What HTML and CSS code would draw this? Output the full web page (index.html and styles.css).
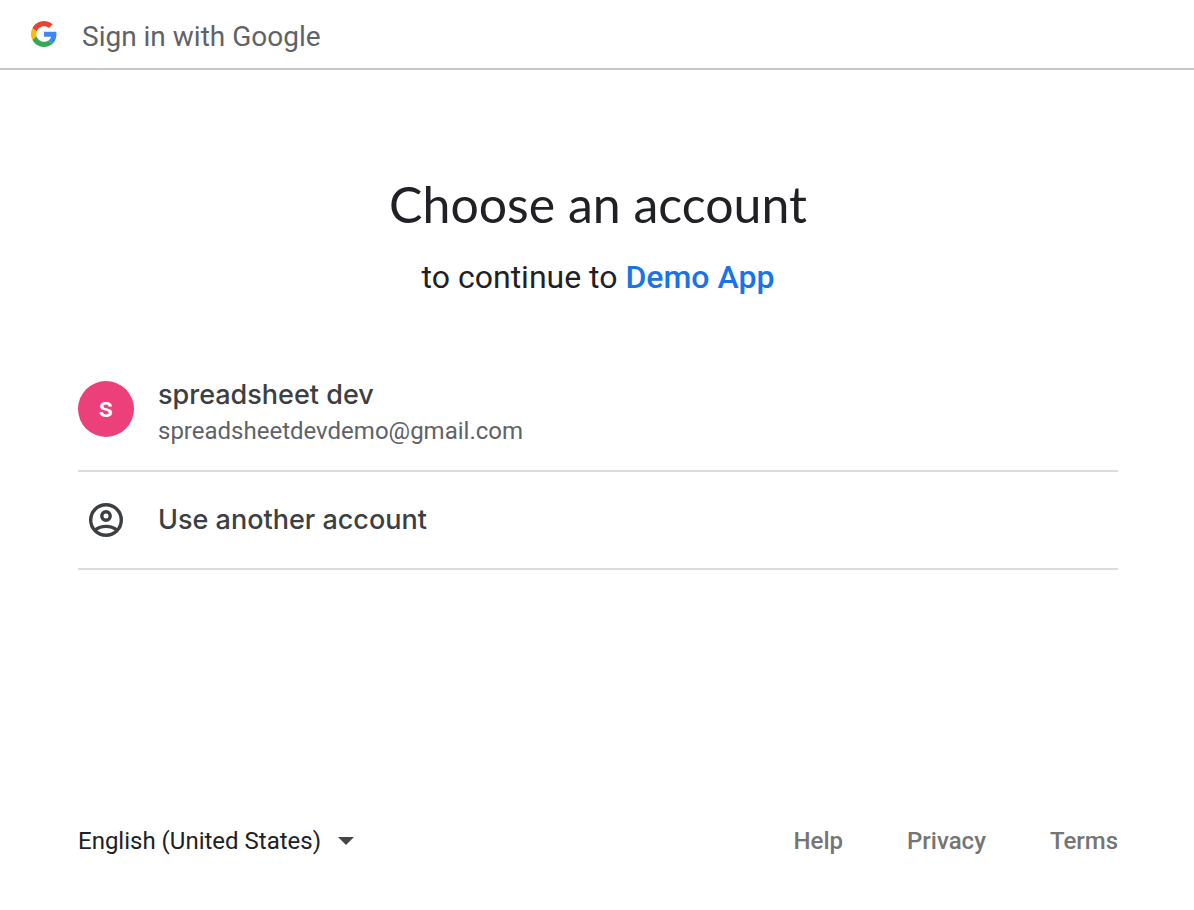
FILE: index.html
```html
<!DOCTYPE html>
<html lang="en">
<head>
<meta charset="utf-8">
<meta name="viewport" content="width=device-width, initial-scale=1">
<title>Sign in with Google</title>
<link rel="stylesheet" href="styles.css">
</head>
<body>
<header class="topbar">
  <svg class="logo" viewBox="0 0 48 48" aria-hidden="true">
    <path fill="#EA4335" d="M24 9.5c3.54 0 6.71 1.22 9.21 3.6l6.85-6.85C35.9 2.38 30.47 0 24 0 14.62 0 6.51 5.38 2.56 13.22l7.98 6.19C12.43 13.72 17.74 9.5 24 9.5z"/>
    <path fill="#4285F4" d="M46.98 24.55c0-1.57-.15-3.09-.38-4.55H24v9.02h12.94c-.58 2.96-2.26 5.48-4.78 7.18l7.73 6c4.51-4.18 7.09-10.36 7.09-17.65z"/>
    <path fill="#FBBC05" d="M10.53 28.59c-.48-1.45-.76-2.99-.76-4.59s.27-3.14.76-4.59l-7.98-6.19C.92 16.46 0 20.12 0 24c0 3.88.92 7.54 2.56 10.78l7.97-6.19z"/>
    <path fill="#34A853" d="M24 48c6.48 0 11.93-2.13 15.89-5.81l-7.73-6c-2.15 1.45-4.92 2.3-8.16 2.3-6.26 0-11.57-4.22-13.47-9.91l-7.98 6.19C6.51 42.62 14.62 48 24 48z"/>
  </svg>
  <span class="topbar-title">Sign in with Google</span>
</header>
<div class="page">
  <main class="chooser">
    <h1 class="heading">Choose an account</h1>
    <p class="subheading">to continue to <a class="app-link" href="#">Demo App</a></p>
    <ul class="accounts">
      <li class="account-item">
        <button class="account account-saved" type="button">
          <span class="avatar" aria-hidden="true">s</span>
          <span class="account-text">
            <span class="account-name">spreadsheet dev</span>
            <span class="account-email">spreadsheetdevdemo@gmail.com</span>
          </span>
        </button>
      </li>
      <li class="account-item">
        <button class="account" type="button">
          <span class="icon-slot">
            <svg class="person" viewBox="0 0 34 34" fill="none" stroke="#3c4043" stroke-width="3.4" aria-hidden="true">
              <circle cx="17" cy="17" r="15.3"/>
              <circle cx="17" cy="13" r="4.2"/>
              <path d="M5.8 27.2C9 24.8 12.8 23.4 17 23.4s8 1.4 11.2 3.8"/>
            </svg>
          </span>
          <span class="account-name">Use another account</span>
        </button>
      </li>
    </ul>
  </main>
  <footer class="footer">
    <div class="language">
      <select class="language-select" aria-label="Language">
        <option>English (United States)</option>
      </select>
      <svg class="caret" viewBox="0 0 16 8" aria-hidden="true"><path fill="#444746" d="M0 0h16L8 8z"/></svg>
    </div>
    <nav class="links">
      <a class="footer-link" href="#">Help</a>
      <a class="footer-link" href="#">Privacy</a>
      <a class="footer-link" href="#">Terms</a>
    </nav>
  </footer>
</div>
</body>
</html>
```
FILE: styles.css
```css
* {
  box-sizing: border-box;
}

body {
  margin: 0;
  min-height: 100vh;
  display: flex;
  flex-direction: column;
  background: #fff;
  color: #202124;
  font-family: Roboto, "Liberation Sans", sans-serif;
}

.topbar {
  display: flex;
  align-items: center;
  gap: 24px;
  padding: 0 30px;
  height: 70px;
  border-bottom: 2px solid #c8c8c8;
}

.logo {
  width: 28px;
  height: 26px;
}

.topbar-title {
  padding-top: 6px;
  color: #5f6368;
  font-size: 28px;
  line-height: 32px;
}

.page {
  flex: 1;
  display: flex;
  flex-direction: column;
  justify-content: space-between;
  padding: 102px 76px 49px 78px;
}

.heading {
  margin: 0;
  font-family: Lato, sans-serif;
  font-size: 50px;
  font-weight: 400;
  line-height: 64px;
  text-align: center;
}

.subheading {
  margin: 16px 0 0;
  font-size: 32px;
  line-height: 50px;
  text-align: center;
}

.app-link {
  color: #1a73e8;
  font-weight: 500;
  text-decoration: none;
}

.accounts {
  margin: 48px 0 0;
  padding: 0;
  list-style: none;
}

.account-item {
  border-bottom: 2px solid #dadce0;
}

.account {
  display: flex;
  align-items: center;
  gap: 24px;
  width: 100%;
  padding: 20px 0;
  border: 0;
  background: none;
  font: inherit;
  text-align: left;
  cursor: pointer;
}

.account-saved {
  align-items: flex-start;
  padding: 27px 0 21px;
}

.avatar,
.icon-slot {
  display: flex;
  align-items: center;
  justify-content: center;
  flex: none;
  width: 56px;
  height: 56px;
}

.avatar {
  margin-top: 4px;
  padding-bottom: 2px;
  border-radius: 50%;
  background: #ec407a;
  color: #fff;
  font-size: 28px;
  font-weight: 500;
  line-height: 52px;
}

.person {
  width: 34px;
  height: 34px;
}

.account-text {
  display: flex;
  flex-direction: column;
}

.account-name {
  color: #3c4043;
  font-family: Inter, sans-serif;
  font-size: 27px;
  font-weight: 500;
  line-height: 36px;
}

.account-email {
  color: #5f6368;
  font-size: 24px;
  line-height: 36px;
}

.footer {
  display: flex;
  align-items: center;
  justify-content: space-between;
}

.language {
  display: flex;
  align-items: center;
  gap: 16px;
}

.language-select {
  appearance: none;
  padding: 0;
  border: 0;
  background: none;
  color: #202124;
  font: inherit;
  font-size: 24px;
  line-height: 40px;
}

.caret {
  width: 16px;
  height: 8px;
}

.links {
  display: flex;
  gap: 64px;
}

.footer-link {
  color: #757575;
  font-size: 24px;
  font-weight: 500;
  line-height: 40px;
  text-decoration: none;
}
```
